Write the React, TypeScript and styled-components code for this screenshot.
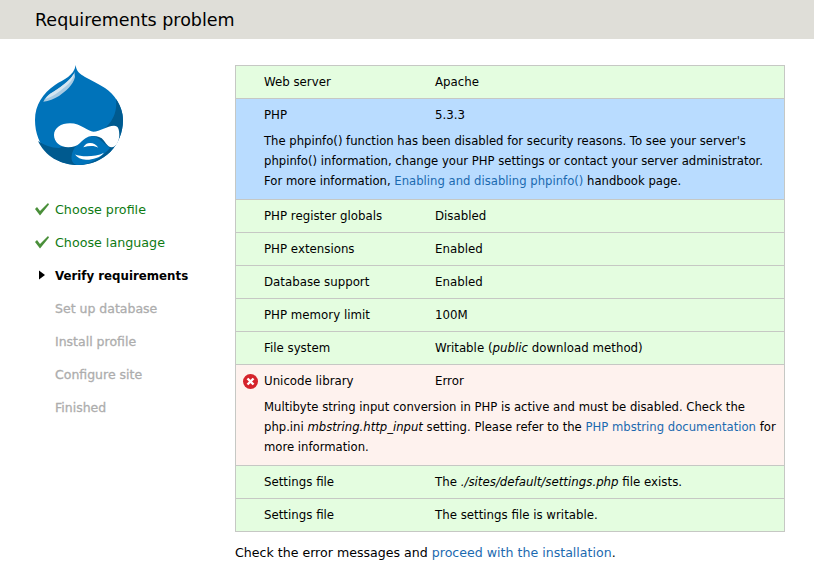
import type { ReactNode } from 'react';
import styled, { createGlobalStyle } from 'styled-components';

const GlobalStyle = createGlobalStyle`
  html, body {
    margin: 0;
    padding: 0;
    background: #fff;
    color: #000;
    font-family: "DejaVu Sans", "Liberation Sans", sans-serif;
    font-size: 12px;
  }
`;

const Header = styled.header`
  height: 39px;
  background: #dfded8;
  padding-left: 35px;
  display: flex;
  align-items: center;
`;

const Title = styled.h1`
  margin: 0;
  font-size: 17.5px;
  font-weight: normal;
  color: #000;
`;

const Page = styled.div`
  display: flex;
  padding: 26px 29px 0 35px;
`;

const Sidebar = styled.aside`
  width: 200px;
  flex: none;
`;

const Logo = styled.svg`
  display: block;
  width: 89px;
  height: 101px;
  margin-bottom: 27px;
`;

const Steps = styled.ol`
  list-style: none;
  margin: 0;
  padding: 0;
`;

const Step = styled.li<{ $state: 'done' | 'active' | 'todo' }>`
  position: relative;
  height: 33px;
  line-height: ${(p) => (p.$state === 'active' ? '35px' : '33px')};
  padding-left: 20px;
  font-size: ${(p) => (p.$state === 'active' ? '11.8px' : p.$state === 'todo' ? '12.5px' : '12.7px')};
  font-weight: ${(p) => (p.$state === 'active' ? 'bold' : 'normal')};
  color: ${(p) => (p.$state === 'done' ? '#0e7a12' : p.$state === 'active' ? '#000' : '#adadad')};
  -webkit-text-stroke: ${(p) => (p.$state === 'todo' ? '0.3px #adadad' : '0')};
`;

const StepMark = styled.svg`
  position: absolute;
  left: -1px;
  top: 9px;
  width: 16px;
  height: 14px;
`;

const Main = styled.main`
  flex: 1;
  min-width: 0;
`;

const Table = styled.table`
  width: 550px;
  border-collapse: collapse;
  table-layout: fixed;
  border: 1px solid #c6c8c4;
`;

const NameColumn = styled.col`
  width: 199.500px;
`;

const Row = styled.tr<{ $kind: 'ok' | 'info' | 'error'; $continued?: boolean }>`
  background: ${(p) => (p.$kind === 'ok' ? '#e4fde0' : p.$kind === 'info' ? '#b9dcff' : '#fef2ee')};
  border-top: ${(p) => (p.$continued ? 'none' : '1px solid #c6c8c4')};
`;

const Cell = styled.td`
  position: relative;
  padding: 8px 7px 7px 28px;
  height: 17px;
  line-height: 17px;
  font-size: 11.8px;
  vertical-align: top;
`;

const ValueCell = styled(Cell)`
  padding-left: 0;
`;

const NoteCell = styled.td`
  padding: 0 0 8px 28px;
  font-size: 11.65px;
  line-height: 20px;
  white-space: nowrap;
`;

const ErrorIcon = styled.svg`
  position: absolute;
  left: 7px;
  top: 9px;
  width: 15px;
  height: 15px;
`;

const Link = styled.a`
  color: #1b6ab0;
  text-decoration: none;
`;

const Footer = styled.p`
  margin: 12px 0 0;
  font-size: 12.6px;
  line-height: 17px;
`;

function DrupalLogo() {
  return (
    <Logo viewBox="0 0 89 101">
      <path
        d="M40.700 0C41 6 45 9 50 12C57 16 64 19 70 23C79 29 88 41 88 55C88 80 69 100 43 100C18 100 0 81 0 55C0 40 8 28 20 20C29 14 39 11 40.700 0Z"
        fill="#0073ba"
      />
      <path d="M81 34C85 40 88 47 88 55C88 80 69 100 43 100C25 100 10 91 3 76C9 80 16 83 24 83L60 70C73 63 83 52 81 34Z" fill="#005a8f" />
      <path d="M40 82C46 76 52 71 57 71C63 71 68 78 75 83C68 91 56 100 43 100C38 100 33 94 40 82Z" fill="#0073ba" />
      <path d="M39.500 7C38 13 29 20 16.700 28C13 30 10 33 8.300 36.700C14 36 19 34 24 31C31 26 38 20 40 12Z" fill="#a8cbe3" />
      <path d="M38.500 9C36 14 29 20 18 27C14 29 12 31 10.500 34C17 32 24 27 30 22C35 18 38 14 39 10Z" fill="#d6e6f1" />
      <path
        d="M35 58.300C26 58.300 19 63 19 70C19 77 25 82.300 33.300 82.300C38 82.300 42 81 45 78C49 74 53 71 56.700 71C60 71 63 71 66.700 73.300C70 76 72 82.300 76.700 82.300C81 82.300 84.300 76 84.300 70C84.300 65 83.500 60.700 79 60.700C72 60.700 65 66.700 58.300 66.700C53 66.700 46 58.300 35 58.300Z"
        fill="#fff"
      />
      <path d="M48.300 82.300C50 79.500 52 78 55 78C58.500 78 61.500 80 63.300 82.800C60 80.500 54 80.500 48.300 82.300Z" fill="#fff" />
      <path d="M40 89.500C46 92 60 92.500 69 87.800C65 93 57 95 51 94.800C46 94.500 42 92.500 40 89.500Z" fill="#fff" />
    </Logo>
  );
}

function Check() {
  return (
    <StepMark viewBox="0 0 16 14">
      <path d="M1 7l2-2 3 4 8-8 1 1.500-9 11z" fill="#4a8f3a" />
    </StepMark>
  );
}

function Arrow() {
  return (
    <StepMark viewBox="0 0 16 14">
      <path d="M5 2.500l6 4.500-6 4.500z" fill="#000" />
    </StepMark>
  );
}

const steps: { label: string; state: 'done' | 'active' | 'todo' }[] = [
  { label: 'Choose profile', state: 'done' },
  { label: 'Choose language', state: 'done' },
  { label: 'Verify requirements', state: 'active' },
  { label: 'Set up database', state: 'todo' },
  { label: 'Install profile', state: 'todo' },
  { label: 'Configure site', state: 'todo' },
  { label: 'Finished', state: 'todo' },
];

function SimpleRow({ name, children }: { name: string; children: ReactNode }) {
  return (
    <Row $kind="ok">
      <Cell>{name}</Cell>
      <ValueCell>{children}</ValueCell>
    </Row>
  );
}

export default function App() {
  return (
    <>
      <GlobalStyle />
      <Header>
        <Title>Requirements problem</Title>
      </Header>
      <Page>
        <Sidebar>
          <DrupalLogo />
          <Steps>
            {steps.map((s) => (
              <Step key={s.label} $state={s.state}>
                {s.state === 'done' && <Check />}
                {s.state === 'active' && <Arrow />}
                {s.label}
              </Step>
            ))}
          </Steps>
        </Sidebar>
        <Main>
          <Table>
            <colgroup>
              <NameColumn />
              <col />
            </colgroup>
            <tbody>
              <SimpleRow name="Web server">Apache</SimpleRow>
              <Row $kind="info">
                <Cell>PHP</Cell>
                <ValueCell>5.3.3</ValueCell>
              </Row>
              <Row $kind="info" $continued>
                <NoteCell colSpan={2}>
                  The phpinfo() function has been disabled for security reasons. To see your server's
                  <br />
                  phpinfo() information, change your PHP settings or contact your server administrator.
                  <br />
                  For more information, <Link href="#">Enabling and disabling phpinfo()</Link> handbook page.
                </NoteCell>
              </Row>
              <SimpleRow name="PHP register globals">Disabled</SimpleRow>
              <SimpleRow name="PHP extensions">Enabled</SimpleRow>
              <SimpleRow name="Database support">Enabled</SimpleRow>
              <SimpleRow name="PHP memory limit">100M</SimpleRow>
              <SimpleRow name="File system">
                Writable (<em>public</em> download method)
              </SimpleRow>
              <Row $kind="error">
                <Cell>
                  <ErrorIcon viewBox="0 0 15 15">
                    <circle cx="7.500" cy="7.500" r="7.500" fill="#d5232b" />
                    <path d="M4.500 4.500l6 6M10.500 4.500l-6 6" stroke="#fff" strokeWidth="2.400" />
                  </ErrorIcon>
                  Unicode library
                </Cell>
                <ValueCell>Error</ValueCell>
              </Row>
              <Row $kind="error" $continued>
                <NoteCell colSpan={2}>
                  Multibyte string input conversion in PHP is active and must be disabled. Check the
                  <br />
                  php.ini <em>mbstring.http_input</em> setting. Please refer to the{' '}
                  <Link href="#">PHP mbstring documentation</Link> for
                  <br />
                  more information.
                </NoteCell>
              </Row>
              <SimpleRow name="Settings file">
                The <em>./sites/default/settings.php</em> file exists.
              </SimpleRow>
              <SimpleRow name="Settings file">The settings file is writable.</SimpleRow>
            </tbody>
          </Table>
          <Footer>
            Check the error messages and <Link href="#">proceed with the installation</Link>.
          </Footer>
        </Main>
      </Page>
    </>
  );
}
